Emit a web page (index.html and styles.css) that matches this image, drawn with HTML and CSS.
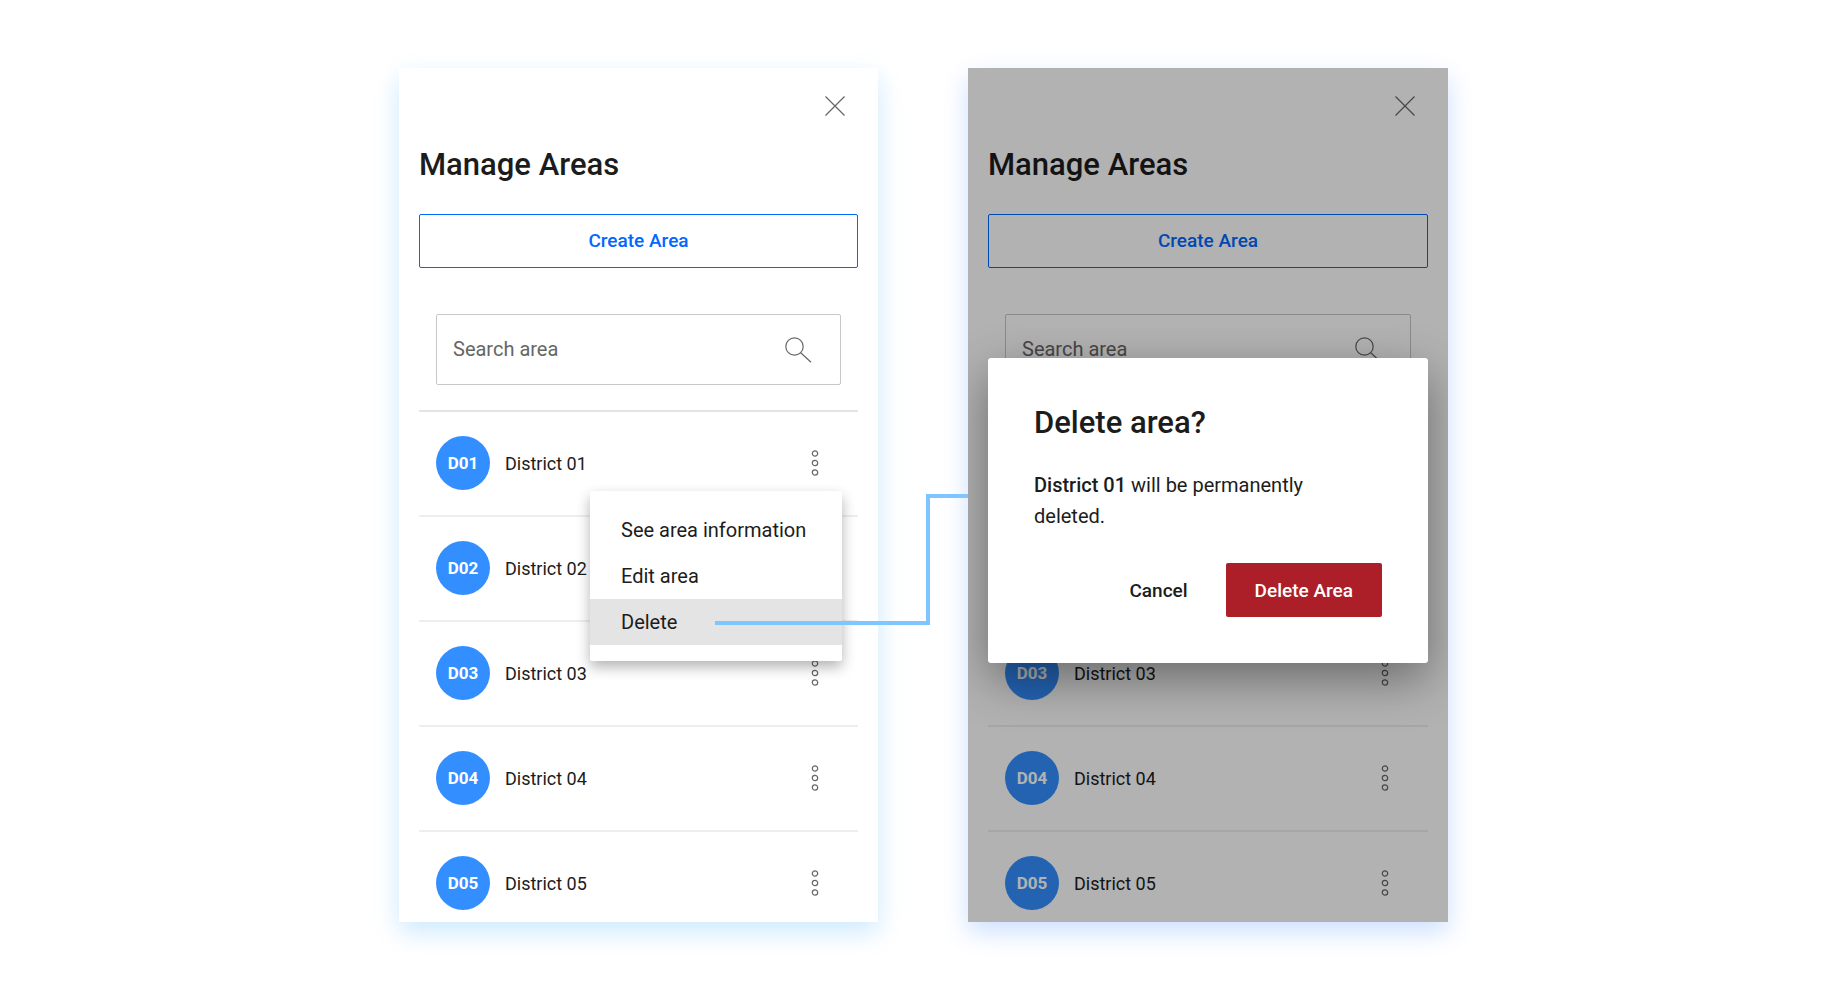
FILE: index.html
```html
<!DOCTYPE html>
<html lang="en">
<head>
<meta charset="utf-8">
<meta name="viewport" content="width=device-width, initial-scale=1">
<title>Manage Areas</title>
<link rel="stylesheet" href="styles.css">
</head>
<body>
<svg class="sprite" aria-hidden="true">
  <symbol id="close" viewBox="0 0 20 20"><path d="M.5.5l19 19M19.5.5l-19 19"/></symbol>
  <symbol id="search" viewBox="0 0 28 28"><circle cx="10.500" cy="10.500" r="8.700"/><path d="M16.700 16.700L27 26.300"/></symbol>
  <symbol id="more" viewBox="0 0 8 28"><circle cx="4" cy="4.500" r="2.700"/><circle cx="4" cy="14" r="2.700"/><circle cx="4" cy="23.500" r="2.700"/></symbol>
</svg>
<main class="stage">
  <section class="panel panel-menu">
    <header class="panel-top"><button class="icon-button" aria-label="Close"><svg class="icon icon-close"><use href="#close"/></svg></button></header>
    <h1 class="title">Manage Areas</h1>
    <button class="create">Create Area</button>
    <label class="search"><input class="search-input" type="text" placeholder="Search area" aria-label="Search area"><svg class="icon icon-search"><use href="#search"/></svg></label>
    <ul class="areas">
      <li class="area"><span class="badge">D01</span><span class="name">District 01</span><button class="more" aria-label="District 01 options"><svg class="icon icon-more"><use href="#more"/></svg></button>
        <div class="menu" role="menu">
          <button class="menu-item" role="menuitem">See area information</button>
          <button class="menu-item" role="menuitem">Edit area</button>
          <button class="menu-item menu-item-active" role="menuitem">Delete</button>
        </div>
      </li>
      <li class="area"><span class="badge">D02</span><span class="name">District 02</span><button class="more" aria-label="District 02 options"><svg class="icon icon-more"><use href="#more"/></svg></button></li>
      <li class="area"><span class="badge">D03</span><span class="name">District 03</span><button class="more" aria-label="District 03 options"><svg class="icon icon-more"><use href="#more"/></svg></button></li>
      <li class="area"><span class="badge">D04</span><span class="name">District 04</span><button class="more" aria-label="District 04 options"><svg class="icon icon-more"><use href="#more"/></svg></button></li>
      <li class="area"><span class="badge">D05</span><span class="name">District 05</span><button class="more" aria-label="District 05 options"><svg class="icon icon-more"><use href="#more"/></svg></button></li>
    </ul>
  </section>

  <section class="panel panel-dialog">
    <header class="panel-top"><button class="icon-button" aria-label="Close"><svg class="icon icon-close"><use href="#close"/></svg></button></header>
    <h1 class="title">Manage Areas</h1>
    <button class="create">Create Area</button>
    <label class="search"><input class="search-input" type="text" placeholder="Search area" aria-label="Search area"><svg class="icon icon-search"><use href="#search"/></svg></label>
    <ul class="areas">
      <li class="area"><span class="badge">D01</span><span class="name">District 01</span><button class="more" aria-label="District 01 options"><svg class="icon icon-more"><use href="#more"/></svg></button></li>
      <li class="area"><span class="badge">D02</span><span class="name">District 02</span><button class="more" aria-label="District 02 options"><svg class="icon icon-more"><use href="#more"/></svg></button></li>
      <li class="area"><span class="badge">D03</span><span class="name">District 03</span><button class="more" aria-label="District 03 options"><svg class="icon icon-more"><use href="#more"/></svg></button></li>
      <li class="area"><span class="badge">D04</span><span class="name">District 04</span><button class="more" aria-label="District 04 options"><svg class="icon icon-more"><use href="#more"/></svg></button></li>
      <li class="area"><span class="badge">D05</span><span class="name">District 05</span><button class="more" aria-label="District 05 options"><svg class="icon icon-more"><use href="#more"/></svg></button></li>
    </ul>
    <div class="backdrop">
      <div class="dialog" role="dialog" aria-labelledby="dialog-title">
        <h2 class="dialog-title" id="dialog-title">Delete area?</h2>
        <p class="dialog-text"><strong class="strong">District 01</strong> will be permanently deleted.</p>
        <div class="actions"><button class="cancel">Cancel</button><button class="delete">Delete Area</button></div>
      </div>
    </div>
  </section>
  <svg class="connector" viewBox="0 0 253 131" aria-hidden="true"><path d="M0 129H213V2H253"/></svg>
</main>
</body>
</html>
```
FILE: styles.css
```css
* { box-sizing: border-box; }

body {
  margin: 0;
  padding: 68px 0;
  background: #fff;
  color: #1c1c1c;
  font-family: Roboto, "Liberation Sans", sans-serif;
  font-size: 20px;
}

button {
  margin: 0;
  padding: 0;
  border: 0;
  background: none;
  color: inherit;
  font: inherit;
}

.sprite { position: absolute; width: 0; height: 0; }

.stage {
  position: relative;
  display: grid;
  grid-template-columns: 479fr 480fr;
  gap: 90px;
  max-width: 1050px;
  margin: 0 auto;
  padding-right: 1px;
}

.panel {
  position: relative;
  padding: 0 20px;
  background: #fff;
}

.panel-menu { box-shadow: 0 10px 24px rgba(0, 145, 255, .2); }
.panel-dialog { box-shadow: 0 10px 24px rgba(0, 98, 255, .2); }

.panel-top {
  display: flex;
  justify-content: flex-end;
  align-items: center;
  height: 75px;
}

.icon-button {
  display: grid;
  place-items: center;
  width: 46px;
  height: 46px;
}

.icon {
  display: block;
  flex: none;
  fill: none;
  stroke: #666;
  stroke-width: 1.2px;
}

.icon-close { width: 20px; height: 20px; }
.icon-search { width: 28px; height: 28px; }
.icon-more { width: 8px; height: 28px; }

.title {
  margin: 2px 0 29px;
  font-size: 31px;
  font-weight: 500;
  line-height: 40px;
}

.create {
  display: block;
  width: 100%;
  height: 54px;
  padding-bottom: 2px;
  border: 1px solid #0068ff;
  border-radius: 2px;
  color: #0068ff;
  font-size: 19px;
  font-weight: 500;
}

.search {
  display: flex;
  align-items: center;
  height: 71px;
  margin: 46px 17px 25px;
  padding: 0 28px 0 16px;
  border: 1px solid #c8c8c8;
  border-radius: 2px;
}

.search-input {
  flex: 1;
  min-width: 0;
  padding: 0 0 2px;
  border: 0;
  background: none;
  color: inherit;
  font: inherit;
}

.search-input::placeholder { color: #666; opacity: 1; }

.areas {
  margin: 0;
  padding: 0;
  border-top: 2px solid #e4e4e4;
  list-style: none;
}

.area {
  position: relative;
  display: flex;
  align-items: center;
  gap: 15px;
  padding: 24px 31px 25px 17px;
  border-bottom: 2px solid #eee;
}

.area:last-child { padding-bottom: 12px; border-bottom: 0; }

.badge {
  display: grid;
  place-items: center;
  width: 54px;
  height: 54px;
  border-radius: 50%;
  background: #338fff;
  color: #fff;
  font-size: 17px;
  font-weight: 700;
}

.name { flex: 1; font-size: 18px; }

.more {
  display: grid;
  place-items: center;
  width: 24px;
  height: 40px;
}

.menu {
  position: absolute;
  z-index: 1;
  top: 79px;
  right: 16px;
  min-width: 252px;
  padding: 16px 0;
  border-radius: 2px;
  background: #fff;
  box-shadow: 0 6px 14px rgba(0, 0, 0, .3);
}

.menu-item {
  display: block;
  width: 100%;
  padding: 0 31px;
  line-height: 46px;
  text-align: left;
}

.menu-item-active { background: #e4e4e4; }

.backdrop {
  position: absolute;
  inset: 0;
  padding: 290px 20px 0;
  overflow: hidden;
  background: rgba(0, 0, 0, .3);
}

.dialog {
  padding: 46px;
  border-radius: 3px;
  background: #fff;
  box-shadow: 0 16px 48px rgba(0, 0, 0, .4);
}

.dialog-title {
  margin: 0 0 28px;
  font-size: 31px;
  font-weight: 500;
  line-height: 38px;
}

.dialog-text {
  max-width: 300px;
  margin: 0 0 31px;
  line-height: 31px;
}

.strong { font-weight: 500; }

.actions {
  display: flex;
  justify-content: flex-end;
  gap: 38px;
  font-size: 19px;
  font-weight: 500;
}

.delete {
  height: 54px;
  padding: 0 29px;
  border-radius: 2px;
  background: #ac1f29;
  color: #fff;
}

.connector {
  position: absolute;
  z-index: 2;
  top: 426px;
  left: 316px;
  width: 253px;
  height: 131px;
  fill: none;
  stroke: #80c5ff;
  stroke-width: 4px;
  pointer-events: none;
}
```
